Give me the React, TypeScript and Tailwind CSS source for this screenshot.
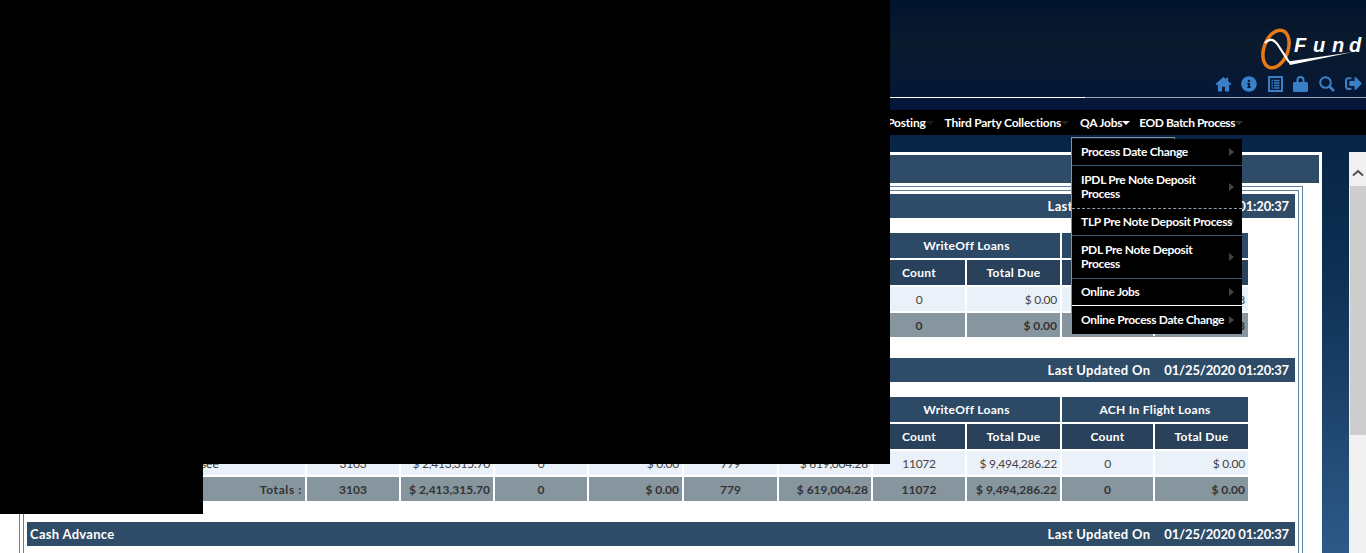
import { FaInfoCircle, FaSignOutAlt } from 'react-icons/fa';

const menuItems = [
  { label: 'Process Date Change', height: 'h-[27px]', line: 'border-[#3d5a75]', wrap: false },
  { label: 'IPDL Pre Note Deposit Process', height: 'h-[43px]', line: 'border-dashed border-[#8fa0b0]', wrap: true },
  { label: 'TLP Pre Note Deposit Process', height: 'h-[27px]', line: 'border-[#3d5a75]', wrap: false },
  { label: 'PDL Pre Note Deposit Process', height: 'h-[43px]', line: 'border-[#3d5a75]', wrap: true },
  { label: 'Online Jobs', height: 'h-[27px]', line: 'border-white', wrap: false },
  { label: 'Online Process Date Change', height: 'h-[28px]', line: 'border-transparent', wrap: false },
];

const groups = ['', '', '', 'WriteOff Loans', 'ACH In Flight Loans'];

const sections = [
  {
    state: '',
    row: ['', '', '', '', '', '', '0', '$ 0.00', '', '$ 1,204.38'],
    totals: ['', '', '', '', '', '', '0', '$ 0.00', '', '$ 1,204.38'],
  },
  {
    state: 'Tennessee',
    row: ['3103', '$ 2,413,315.70', '0', '$ 0.00', '779', '$ 619,004.28', '11072', '$ 9,494,286.22', '0', '$ 0.00'],
    totals: ['3103', '$ 2,413,315.70', '0', '$ 0.00', '779', '$ 619,004.28', '11072', '$ 9,494,286.22', '0', '$ 0.00'],
  },
];

function SectionHeader({ title }: { title: string }) {
  return (
    <div className="flex h-6 items-center justify-between bg-[#2e4c68] pl-[3px] pr-[6px] pt-px text-[13px] font-bold text-white">
      <span className="tracking-[0.3px]">{title}</span>
      <span className="flex gap-[14px]">
        <span className="tracking-[0.33px]">Last Updated On</span>
        <span className="tracking-[-0.15px]">01/25/2020 01:20:37</span>
      </span>
    </div>
  );
}

function LoanTable({ state, row, totals }: { state: string; row: string[]; totals: string[] }) {
  return (
    <div className="mt-[15px] grid w-[1221px] grid-cols-[278px_92px_92px_92px_93px_93px_92px_92px_93px_91px_93px] grid-rows-[25px_25px_24px_24px] gap-x-[2px] gap-y-[2px] text-xs">
      <div className="row-span-2 bg-[#2c4a66]" />
      {groups.map((g, i) => (
        <div key={i} className="col-span-2 flex items-center justify-center bg-[#2c4a66] font-bold tracking-[0.3px] text-white">
          {g}
        </div>
      ))}
      {groups.map((_, i) => (
        <div key={i} className="col-span-2 grid grid-cols-subgrid">
          <div className="flex items-center justify-center bg-[#29415a] font-bold tracking-[0.3px] text-white">Count</div>
          <div className="flex items-center justify-center bg-[#29415a] font-bold tracking-[0.3px] text-white">Total Due</div>
        </div>
      ))}
      <div className="flex items-center bg-[#eaf1f9] pl-[137px] pt-px text-[#333]">{state}</div>
      {row.map((v, i) => (
        <div
          key={i}
          className={`flex items-center bg-[#eaf1f9] pt-px tracking-[-0.25px] text-[#444] ${i % 2 === 0 ? 'justify-center' : 'justify-end pr-[3px]'}`}
        >
          {v}
        </div>
      ))}
      <div className="flex items-center justify-end bg-[#87959f] pr-[3px] pt-px font-bold tracking-[0.6px] text-[#333]">Totals :</div>
      {totals.map((v, i) => (
        <div
          key={i}
          className={`flex items-center bg-[#87959f] pt-px font-bold text-[#333] ${i % 2 === 0 ? 'justify-center' : 'justify-end pr-[3px]'}`}
        >
          {v}
        </div>
      ))}
    </div>
  );
}

function NavItem({ label, caret, className = '' }: { label: string; caret: string; className?: string }) {
  return (
    <span className={`flex items-center ${className}`}>
      {label}
      <span className={`-mr-[7px] h-0 w-0 border-x-[4px] border-t-[4px] border-x-transparent ${caret}`} />
    </span>
  );
}

function Logo() {
  return (
    <svg width="108" height="45" viewBox="0 0 108 45" className="block">
      <ellipse cx="18" cy="22" rx="12" ry="19.5" transform="rotate(20 18 22)" fill="none" stroke="#e57a14" strokeWidth="3.5" />
      <path d="M7 16 C11 11 16 12 20 18 L31 35" fill="none" stroke="#fff" strokeWidth="2.2" />
      <path d="M30 34.5 L95 25 L32 38 Z" fill="#fff" />
      <text x="36 55 74 91" y="25" fill="#fff" fontSize="20" fontStyle="italic" fontWeight="700" fontFamily="Liberation Sans, sans-serif">
        Fund
      </text>
    </svg>
  );
}

function HomeIcon() {
  return (
    <svg width="17" height="16" viewBox="0 0 18 16" fill="currentColor">
      <path d="M9 0.5L0.5 8l1.2 1.3L3 8.300V16h4.500v-5h3v5H15V8.300l1.300 1L17.500 8 14 5V1.500h-2.500v1.400Z" />
    </svg>
  );
}

function ListIcon() {
  return (
    <svg width="15" height="16" viewBox="0 0 15 16" fill="none" stroke="currentColor">
      <rect x="1" y="1" width="13" height="14" strokeWidth="2" />
      <path d="M3.500 4.500h1.500M6 4.500h5.500M3.500 7h1.500M6 7h5.500M3.500 9.500h1.500M6 9.500h5.500M3.500 12h1.500M6 12h5.500" strokeWidth="1.300" />
    </svg>
  );
}

function LockIcon() {
  return (
    <svg width="15" height="16" viewBox="0 0 15 16" fill="currentColor">
      <path d="M4.500 7V4a3 3 0 0 1 6 0v3" fill="none" stroke="currentColor" strokeWidth="2" />
      <rect x="0" y="6" width="15" height="10" rx="1.500" />
    </svg>
  );
}

function SearchIcon() {
  return (
    <svg width="16" height="16" viewBox="0 0 16 16" fill="none" stroke="currentColor">
      <circle cx="6.500" cy="6.500" r="5.300" strokeWidth="2" />
      <path d="M10.500 10.500L15 15" strokeWidth="2.600" />
    </svg>
  );
}

export default function App() {
  return (
    <div className="relative h-[553px] w-[1366px] overflow-hidden bg-linear-to-b from-[#031a3a] via-[#0e3053] via-50% to-[#2e5a88] font-['Lato','Liberation_Sans',sans-serif]">
      {/* header */}
      <div className="h-[110px] bg-linear-to-b from-[#02132e] via-[#0b1a2d] via-40% to-[#05163a]">
        <div className="flex h-[97px] flex-col items-end justify-end gap-[3px] pb-[5px]">
          <Logo />
          <div className="mr-[4px] flex items-center gap-[10px] text-[#3b80c6]">
            <HomeIcon />
            <span className="-ml-px">
              <FaInfoCircle size={16} />
            </span>
            <span className="ml-px">
              <ListIcon />
            </span>
            <LockIcon />
            <span className="ml-px">
              <SearchIcon />
            </span>
            <FaSignOutAlt size={17} />
          </div>
        </div>
        <div className="flex h-px">
          <div className="w-[1085px] bg-white" />
          <div className="flex-1 bg-[#9aa5b1]" />
        </div>
      </div>

      {/* nav */}
      <div className="flex h-[25px] items-center justify-end gap-[18px] bg-black pr-[130px] text-xs font-bold tracking-[-0.22px] text-white">
        <NavItem label="Posting" caret="border-t-[#1a1a1a]" />
        <NavItem label="Third Party Collections" caret="border-t-[#222]" />
        <NavItem label="QA Jobs" caret="border-t-white" className="-mr-[2px]" />
        <NavItem label="EOD Batch Process" caret="border-t-[#333]" className="tracking-[-0.45px]" />
      </div>

      {/* body */}
      <div className="mt-[17px] flex h-[401px] items-stretch">
        <div className="w-[1322px] bg-white pt-[3px]">
          <div className="mr-[3px] h-7 bg-[#2e4c68]" />
          <div className="ml-[19px] mr-[19px] mt-[3px] border border-b-0 border-[#5f82a0] px-[3px] pt-[3px]">
            <div className="border border-b-0 border-[#5f82a0] px-[3px] pt-[3px]">
              {sections.map((s, i) => (
                <div key={i} className="pb-[21px]">
                  <SectionHeader title="" />
                  <LoanTable state={s.state} row={s.row} totals={s.totals} />
                </div>
              ))}
              <SectionHeader title="Cash Advance" />
              <div className="h-[20px]" />
            </div>
          </div>
        </div>
        <div className="ml-[27px] flex w-[17px] flex-col bg-[#f0f0f0]">
          <div className="flex h-[34px] items-center justify-center pl-px pt-[8px]">
            <svg width="12" height="8" viewBox="0 0 12 8">
              <path d="M1 6.500 L6 2 L11 6.500" fill="none" stroke="#505050" strokeWidth="2" />
            </svg>
          </div>
          <div className="ml-px h-[249px] bg-[#cdcdcd]" />
        </div>
      </div>

      {/* QA Jobs dropdown */}
      <div className="absolute left-[1071px] top-[137px] h-[200px] w-[104px] border border-[#8f8f8f]" />
      <div className="absolute left-[1072px] top-[139px] w-[170px] bg-black text-xs font-bold leading-[14px] tracking-[-0.32px] text-white">
        {menuItems.map((item) => (
          <div key={item.label} className={`relative flex items-center border-b pl-[9px] ${item.height} ${item.line}`}>
            <span className="absolute left-[157px] h-0 w-0 border-y-[4px] border-l-[5px] border-y-transparent border-l-[#444]" />
            <span className={`relative ${item.wrap ? 'w-[130px]' : 'whitespace-nowrap'}`}>{item.label}</span>
          </div>
        ))}
      </div>

      {/* blacked out regions of the screenshot */}
      <div className="absolute left-0 top-0 h-[464px] w-[890px] bg-black" />
      <div className="absolute left-0 top-[464px] h-[50px] w-[203px] bg-black" />
    </div>
  );
}
